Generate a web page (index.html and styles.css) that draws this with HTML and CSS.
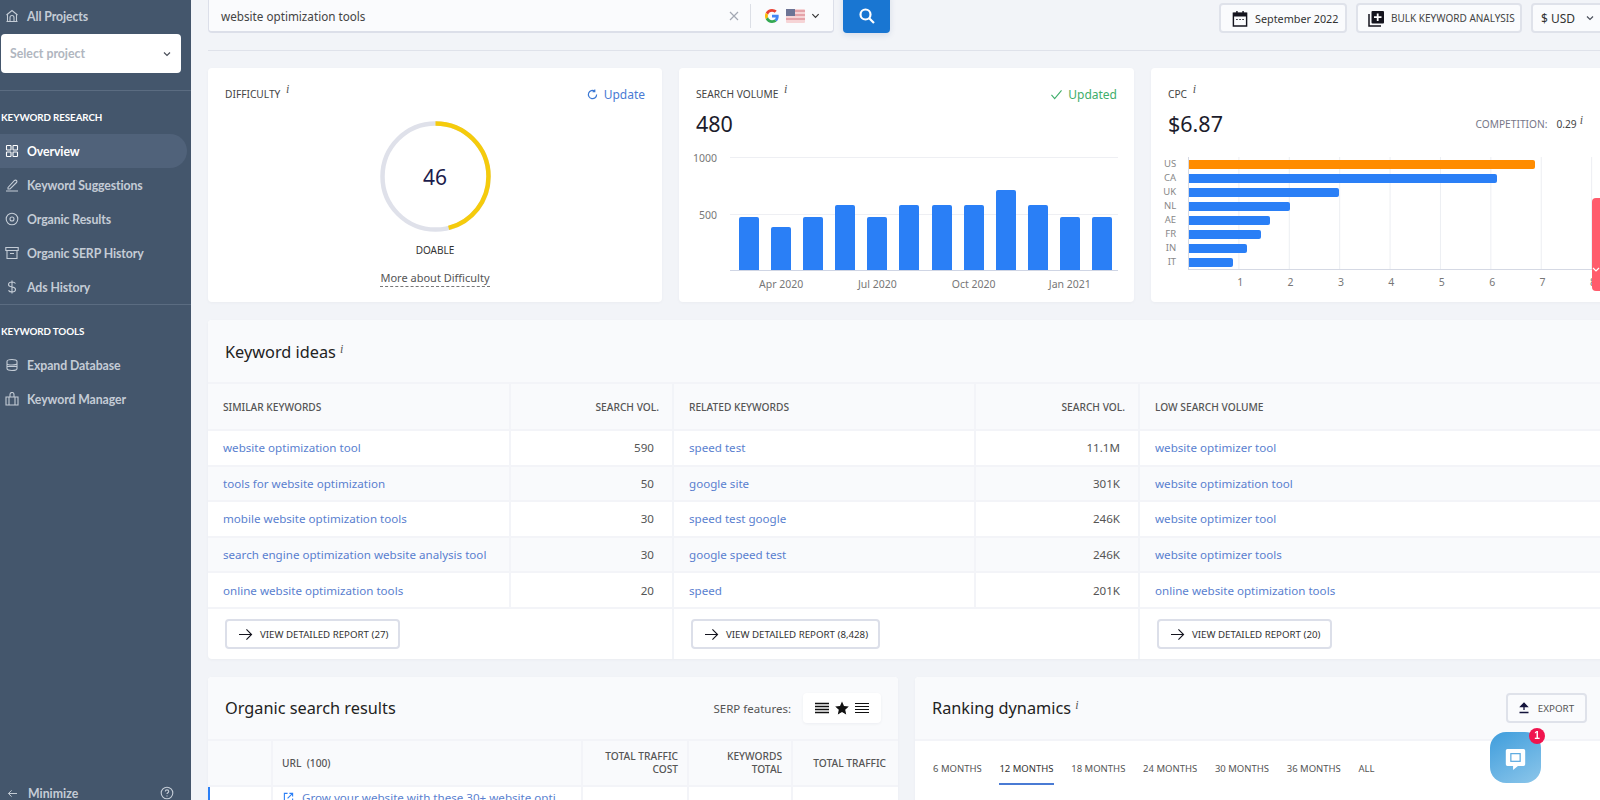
FILE: index.html
```html
<!DOCTYPE html>
<html lang="en">
<head>
<meta charset="utf-8">
<title>Keyword Overview</title>
<link rel="stylesheet" href="styles.css">
</head>
<body>
<aside class="sidebar">
  <div class="side-top">
    <a class="nav-item">
      <svg class="nav-icon" viewBox="0 0 14 14"><path d="M1.500 6 7 1.500 12.500 6M2.500 5.500v7h9v-7M5 12.500V8.500a2 2 0 0 1 4 0v4M1.500 12.500h11"/></svg>
      <span>All Projects</span>
    </a>
    <div class="project-select"><span>Select project</span><svg class="chev" viewBox="0 0 10 6"><path d="M2 1.500 5 4.500 8 1.500"/></svg></div>
  </div>
  <section class="side-group">
    <h3>KEYWORD RESEARCH</h3>
    <a class="nav-item active">
      <svg class="nav-icon" viewBox="0 0 14 14"><rect x="1.500" y="1.500" width="4.500" height="4.500" rx=".6"/><rect x="8" y="1.500" width="4.500" height="4.500" rx=".6"/><rect x="1.500" y="8" width="4.500" height="4.500" rx=".6"/><rect x="8" y="8" width="4.500" height="4.500" rx=".6"/></svg>
      <span>Overview</span>
    </a>
    <a class="nav-item">
      <svg class="nav-icon" viewBox="0 0 14 14"><path d="M3 9.500 9.500 2.500a1.400 1.400 0 0 1 2 2L5 11H3zM1 13h12"/></svg>
      <span>Keyword Suggestions</span>
    </a>
    <a class="nav-item">
      <svg class="nav-icon" viewBox="0 0 14 14"><circle cx="7" cy="7" r="5.800"/><circle cx="7" cy="7" r="2"/></svg>
      <span>Organic Results</span>
    </a>
    <a class="nav-item">
      <svg class="nav-icon" viewBox="0 0 14 14"><path d="M.8 1.500h12.400v3H.8zM2 4.500v8h10v-8M5 7.500h4"/></svg>
      <span>Organic SERP History</span>
    </a>
    <a class="nav-item">
      <svg class="nav-icon" viewBox="0 0 14 14"><path d="M10.500 3.500C9.800 2.500 8.500 2 7 2 5 2 3.500 3 3.500 4.600S5 6.800 7 7s3.500 1 3.500 2.500S9 12 7 12c-1.600 0-2.900-.6-3.500-1.600M7 .5v13"/></svg>
      <span>Ads History</span>
    </a>
  </section>
  <section class="side-group">
    <h3>KEYWORD TOOLS</h3>
    <a class="nav-item">
      <svg class="nav-icon" viewBox="0 0 14 14"><path d="M2 3.500C2 2 4 1.500 7 1.500s5 .5 5 2v7c0 1.500-2 2-5 2s-5-.5-5-2zM2 5.500c0 1 2 1.500 5 1.500s5-.5 5-1.500M2 8.500h10"/></svg>
      <span>Expand Database</span>
    </a>
    <a class="nav-item">
      <svg class="nav-icon" viewBox="0 0 14 14"><path d="M1 5h12v8H1zM4 5v8M10 5v8M5 5V2.500a2 2 0 0 1 4 0V5"/></svg>
      <span>Keyword Manager</span>
    </a>
  </section>
  <div class="side-bottom">
    <svg class="min-arrow" viewBox="0 0 12 10"><path d="M11 5H1.500M5 1.500 1.500 5 5 8.500"/></svg>
    <span class="min-label">Minimize</span>
    <svg class="help" viewBox="0 0 14 14"><circle cx="7" cy="7" r="5.800"/><path d="M5.300 5.500c0-1 .8-1.600 1.700-1.600s1.700.6 1.700 1.500c0 1.300-1.700 1.300-1.700 2.600M7 9.500v1"/></svg>
  </div>
</aside>

<main class="main">
  <header class="toolbar">
    <div class="search-box">
      <span class="search-text">website optimization tools</span>
      <svg class="clear" viewBox="0 0 10 10"><path d="M1 1l8 8M9 1l-8 8"/></svg>
      <span class="search-sep"></span>
      <svg class="g-logo" viewBox="0 0 48 48"><path fill="#ea4335" d="M24 9.500c3.500 0 6.700 1.200 9.200 3.600l6.900-6.900C35.900 2.400 30.400 0 24 0 14.600 0 6.500 5.400 2.600 13.200l8 6.200C12.400 13.700 17.700 9.500 24 9.500z"/><path fill="#4285f4" d="M47 24.500c0-1.600-.1-3.100-.4-4.500H24v9h12.900c-.6 3-2.200 5.500-4.800 7.200l7.700 6C44.300 38 47 31.800 47 24.500z"/><path fill="#fbbc05" d="M10.500 28.600c-.5-1.400-.8-3-.8-4.600s.3-3.200.8-4.600l-8-6.200C.9 16.500 0 20.100 0 24s.9 7.500 2.600 10.800z"/><path fill="#34a853" d="M24 48c6.500 0 11.900-2.100 15.900-5.800l-7.700-6c-2.200 1.500-4.900 2.300-8.100 2.300-6.300 0-11.600-4.200-13.500-9.900l-8 6.200C6.500 42.600 14.600 48 24 48z"/></svg>
      <svg class="flag" viewBox="0 0 19 14"><rect width="19" height="14" rx="1" fill="#f6d4d6"/><path d="M0 2h19M0 6h19M0 10h19" stroke="#cc5c66" stroke-width="1.200" opacity=".8"/><rect width="9" height="7" fill="#6d7495"/></svg>
      <svg class="flag-chev" viewBox="0 0 10 6"><path d="M1.500 1 5 4.500 8.500 1"/></svg>
    </div>
    <button class="search-btn" type="button"><svg viewBox="0 0 18 18"><circle cx="7.500" cy="7.500" r="5"/><path d="M11 11l5 5"/></svg></button>
    <div class="tool-right">
      <button class="tool-btn date" type="button">
        <svg class="ico-cal" viewBox="0 0 16 18"><path d="M1 3.500h14v13.500H1z" fill="none" stroke="#14141e" stroke-width="1.500"/><path d="M1 3h14v4H1zM4 1h1.500v3H4zM10.500 1H12v3h-1.500z" fill="#14141e"/><path d="M4 10h1.500M7.300 10h1.500M10.500 10H12" stroke="#14141e" stroke-width="1.200"/></svg>
        <span>September 2022</span>
      </button>
      <button class="tool-btn bulk" type="button">
        <svg class="ico-bulk" viewBox="0 0 17 17"><path d="M1 4v12h12" fill="none" stroke="#14141e" stroke-width="1.500"/><rect x="3.500" y="1" width="12.500" height="12.500" rx="1" fill="#14141e"/><path d="M9.700 3.500v7.500M6 7.200h7.500" stroke="#fff" stroke-width="1.800"/></svg>
        <span>BULK KEYWORD ANALYSIS</span>
      </button>
      <button class="tool-btn usd" type="button"><span>$ USD</span><svg class="chev" viewBox="0 0 10 6"><path d="M2 1.500 5 4.500 8 1.500"/></svg></button>
    </div>
  </header>

  <div class="metrics">
    <section class="card diff">
      <div class="card-head">
        <h4>DIFFICULTY <i>i</i></h4>
        <a class="update"><svg viewBox="0 0 12 12"><path d="M10.500 6A4.500 4.500 0 1 1 8.500 2.300M8.500.5v2.500H6"/></svg>Update</a>
      </div>
      <div class="gauge">
        <svg viewBox="0 0 111 111"><circle class="g-track" cx="55.500" cy="55.500" r="53"/><circle class="g-val" cx="55.500" cy="55.500" r="53" pathLength="100" stroke-dasharray="46 100" transform="rotate(-90 55.500 55.500)"/></svg>
        <span class="g-num">46</span>
      </div>
      <div class="doable">DOABLE</div>
      <a class="more">More about Difficulty</a>
    </section>

    <section class="card vol">
      <div class="card-head">
        <h4>SEARCH VOLUME <i>i</i></h4>
        <span class="updated"><svg viewBox="0 0 14 12"><path d="M1.500 6.500 5 10.500 12.500 1.500"/></svg>Updated</span>
      </div>
      <div class="big-num">480</div>
      <div class="vol-chart">
        <div class="vol-y"><span>1000</span><span>500</span></div>
        <div class="vol-right">
          <div class="vol-plot">
            <div class="bar-cell"><div class="bar" style="height:53px"></div></div>
            <div class="bar-cell"><div class="bar" style="height:43px"></div></div>
            <div class="bar-cell"><div class="bar" style="height:53px"></div></div>
            <div class="bar-cell"><div class="bar" style="height:65px"></div></div>
            <div class="bar-cell"><div class="bar" style="height:53px"></div></div>
            <div class="bar-cell"><div class="bar" style="height:65px"></div></div>
            <div class="bar-cell"><div class="bar" style="height:65px"></div></div>
            <div class="bar-cell"><div class="bar" style="height:65px"></div></div>
            <div class="bar-cell"><div class="bar" style="height:80px"></div></div>
            <div class="bar-cell"><div class="bar" style="height:65px"></div></div>
            <div class="bar-cell"><div class="bar" style="height:53px"></div></div>
            <div class="bar-cell"><div class="bar" style="height:53px"></div></div>
          </div>
          <div class="vol-x">
            <span></span><span>Apr 2020</span><span></span><span></span><span>Jul 2020</span><span></span><span></span><span>Oct 2020</span><span></span><span></span><span>Jan 2021</span><span></span>
          </div>
        </div>
      </div>
    </section>

    <section class="card cpc">
      <div class="card-head">
        <h4>CPC <i>i</i></h4>
      </div>
      <div class="cpc-num">
        <div class="big-num">$6.87</div>
        <div class="comp"><span>COMPETITION:</span><b>0.29</b><i>i</i></div>
      </div>
      <div class="cpc-chart">
        <div class="cpc-y"><span>US</span><span>CA</span><span>UK</span><span>NL</span><span>AE</span><span>FR</span><span>IN</span><span>IT</span></div>
        <div class="cpc-plot">
          <div class="h-row"><div class="h-bar top" style="width:346px"></div></div>
          <div class="h-row"><div class="h-bar" style="width:308px"></div></div>
          <div class="h-row"><div class="h-bar" style="width:150px"></div></div>
          <div class="h-row"><div class="h-bar" style="width:101px"></div></div>
          <div class="h-row"><div class="h-bar" style="width:81px"></div></div>
          <div class="h-row"><div class="h-bar" style="width:72px"></div></div>
          <div class="h-row"><div class="h-bar" style="width:58px"></div></div>
          <div class="h-row"><div class="h-bar" style="width:44px"></div></div>
        </div>
      </div>
      <div class="cpc-x"><span>1</span><span>2</span><span>3</span><span>4</span><span>5</span><span>6</span><span>7</span><span>8</span></div>
    </section>
  </div>

  <section class="card ideas">
    <div class="ideas-head"><h2>Keyword ideas <i>i</i></h2></div>
    <div class="ideas-cols">
      <div class="ideas-col c1">
        <div class="i-row i-th"><span class="i-name">SIMILAR KEYWORDS</span><span class="i-val">SEARCH VOL.</span></div>
        <div class="i-row"><a class="i-name">website optimization tool</a><span class="i-val">590</span></div>
        <div class="i-row alt"><a class="i-name">tools for website optimization</a><span class="i-val">50</span></div>
        <div class="i-row"><a class="i-name">mobile website optimization tools</a><span class="i-val">30</span></div>
        <div class="i-row alt"><a class="i-name">search engine optimization website analysis tool</a><span class="i-val">30</span></div>
        <div class="i-row"><a class="i-name">online website optimization tools</a><span class="i-val">20</span></div>
        <div class="i-foot"><button class="report" type="button"><svg viewBox="0 0 16 14"><path d="M1 7h13.500M9 1.500 14.500 7 9 12.500"/></svg><span>VIEW DETAILED REPORT (27)</span></button></div>
      </div>
      <div class="ideas-col c2">
        <div class="i-row i-th"><span class="i-name">RELATED KEYWORDS</span><span class="i-val">SEARCH VOL.</span></div>
        <div class="i-row"><a class="i-name">speed test</a><span class="i-val">11.1M</span></div>
        <div class="i-row alt"><a class="i-name">google site</a><span class="i-val">301K</span></div>
        <div class="i-row"><a class="i-name">speed test google</a><span class="i-val">246K</span></div>
        <div class="i-row alt"><a class="i-name">google speed test</a><span class="i-val">246K</span></div>
        <div class="i-row"><a class="i-name">speed</a><span class="i-val">201K</span></div>
        <div class="i-foot"><button class="report" type="button"><svg viewBox="0 0 16 14"><path d="M1 7h13.500M9 1.500 14.500 7 9 12.500"/></svg><span>VIEW DETAILED REPORT (8,428)</span></button></div>
      </div>
      <div class="ideas-col c3">
        <div class="i-row i-th"><span class="i-name">LOW SEARCH VOLUME</span></div>
        <div class="i-row"><a class="i-name">website optimizer tool</a></div>
        <div class="i-row alt"><a class="i-name">website optimization tool</a></div>
        <div class="i-row"><a class="i-name">website optimizer tool</a></div>
        <div class="i-row alt"><a class="i-name">website optimizer tools</a></div>
        <div class="i-row"><a class="i-name">online website optimization tools</a></div>
        <div class="i-foot"><button class="report" type="button"><svg viewBox="0 0 16 14"><path d="M1 7h13.500M9 1.500 14.500 7 9 12.500"/></svg><span>VIEW DETAILED REPORT (20)</span></button></div>
      </div>
    </div>
  </section>

  <div class="bottom-row">
    <section class="card organic">
      <div class="b-head">
        <h2>Organic search results</h2>
        <div class="serp">
          <span>SERP features:</span>
          <div class="serp-toggle">
            <svg viewBox="0 0 14 12"><path d="M0 1.500h14M0 4.500h14M0 7.500h14M0 10.500h14"/></svg>
            <svg class="star" viewBox="0 0 14 14"><path d="M7 .5l2 4.500 4.800.5-3.600 3.200 1 4.800L7 11l-4.200 2.500 1-4.800L.2 5.500 5 5z"/></svg>
            <svg class="thin" viewBox="0 0 14 12"><path d="M0 1.500h14M0 4.500h14M0 7.500h14M0 10.500h14"/></svg>
          </div>
        </div>
      </div>
      <div class="o-table">
        <div class="o-th"></div>
        <div class="o-th o-url">URL&nbsp; (100)</div>
        <div class="o-th o-r">TOTAL TRAFFIC<br>COST</div>
        <div class="o-th o-r">KEYWORDS<br>TOTAL</div>
        <div class="o-th o-r">TOTAL TRAFFIC</div>
        <div class="o-td o-first"></div>
        <div class="o-td o-link"><svg viewBox="0 0 12 12"><path d="M5 1.500H1.500v9h9V7M7 1.500h3.500V5M10.500 1.500 5 7"/></svg><a>Grow your website with these 30+ website opti</a></div>
        <div class="o-td"></div>
        <div class="o-td"></div>
        <div class="o-td"></div>
      </div>
    </section>
    <section class="card ranking">
      <div class="b-head">
        <h2>Ranking dynamics <i>i</i></h2>
        <button class="export" type="button"><svg viewBox="0 0 10 12"><path d="M5 8V1.500M1.800 4.500 5 1.200l3.200 3.300z" /><path d="M.5 10.500h9"/></svg><span>EXPORT</span></button>
      </div>
      <nav class="tabs">
        <a>6 MONTHS</a><a class="on">12 MONTHS</a><a>18 MONTHS</a><a>24 MONTHS</a><a>30 MONTHS</a><a>36 MONTHS</a><a>ALL</a>
      </nav>
    </section>
  </div>
</main>

<div class="side-tab"><svg viewBox="0 0 8 6"><path d="M1 1l3 3 3-3"/></svg></div>
<div class="chat">
  <svg viewBox="0 0 26 28"><path d="M3 1h20a2 2 0 0 1 2 2v17a2 2 0 0 1-2 2h-7l-6 5v-5H3a2 2 0 0 1-2-2V3a2 2 0 0 1 2-2z" fill="#fff"/><rect x="6.500" y="6" width="13" height="11" fill="#5aa9e0" /><rect x="8" y="7.500" width="10" height="8" fill="#fff"/></svg>
  <span class="chat-badge">1</span>
</div>
</body>
</html>
```

FILE: styles.css
```css
* { box-sizing: border-box; }
html, body { margin: 0; height: 800px; overflow: hidden; }
body {
  display: flex;
  background: #f2f4f8;
  font-family: "Noto Sans", "Liberation Sans", sans-serif;
  color: #333;
}
h2, h3, h4 { margin: 0; font-weight: 400; }
button { font-family: inherit; cursor: pointer; }

/* Sidebar */
.sidebar {
  width: 191px;
  height: 800px;
  flex: none;
  background: #44566c;
  display: flex;
  flex-direction: column;
  font-family: Lato, sans-serif;
  position: relative;
}
.side-top { padding-bottom: 17px; border-bottom: 1px solid #5b6c81; }
.nav-item {
  height: 34px;
  display: flex;
  align-items: center;
  gap: 8px;
  padding-left: 5px;
  font-size: 12.300px;
  font-weight: 700;
  color: #c4ccd6;
  letter-spacing: -0.1px;
}
.nav-icon { width: 14px; height: 14px; fill: none; stroke: #c4ccd6; stroke-width: 1.100; flex: none; }
.side-top .nav-item { height: 32px; margin-bottom: 2px; }
.project-select {
  margin-left: 1px;
  width: 180px;
  height: 39px;
  background: #fff;
  border-radius: 4px;
  display: flex;
  align-items: center;
  justify-content: space-between;
  padding: 0 9px;
  font-size: 12.300px;
  font-weight: 700;
  color: #b0b6c0;
}
.chev { width: 10px; height: 6px; fill: none; stroke: #4a4f5a; stroke-width: 1.200; }
.side-group { padding-top: 20px; border-bottom: 1px solid #5b6c81; padding-bottom: 0; }
.side-group + .side-group { border-bottom: 0; }
.side-group h3 { font-size: 9.800px; font-weight: 700; color: #fff; padding-left: 1px; line-height: 13px; margin-bottom: 10px; letter-spacing: -0.1px; }
.nav-item.active {
  width: 187px;
  background: #50627a;
  border-radius: 0 17px 17px 0;
  color: #fff;
}
.nav-item.active .nav-icon { stroke: #fff; }
.side-bottom {
  position: absolute;
  left: 0; right: 0; bottom: -1px;
  height: 16px;
  display: flex;
  align-items: center;
  padding-left: 7px;
  color: #c4ccd6;
  font-size: 12.300px;
  font-weight: 700;
}
.min-arrow { width: 11px; height: 9px; fill: none; stroke: #c4ccd6; stroke-width: 1.100; margin-right: 10px; }
.min-label { flex: 1; }
.help { width: 14px; height: 14px; fill: none; stroke: #c4ccd6; stroke-width: 1.100; margin-right: 17px; }

/* Main */
.main { flex: 1; min-width: 0; overflow: hidden; padding-left: 17px; }
.toolbar {
  width: 1500px;
  height: 51px;
  border-bottom: 1px solid #dfe2ea;
  display: flex;
  padding-bottom: 17px;
  align-items: flex-end;
}
.search-box {
  width: 626px;
  height: 40px;
  margin-top: -7px;
  background: #fafbfd;
  border: 1px solid #dcdfe9;
  border-bottom-width: 2px;
  border-top: 0;
  border-radius: 0 0 4px 4px;
  display: flex;
  align-items: center;
  padding: 7px 0 0 12px;
  font-size: 11.700px;
  color: #444;
}
.search-text { flex: 1; }
.clear { width: 10px; height: 10px; fill: none; stroke: #a3a8b3; stroke-width: 1.200; margin-right: 11px; }
.search-sep { width: 1px; height: 24px; background: #dcdfe6; margin-right: 14px; }
.g-logo { width: 14px; height: 14px; margin-right: 7px; }
.flag { width: 19px; height: 14px; margin-right: 6px; }
.flag-chev { width: 9px; height: 6px; fill: none; stroke: #333; stroke-width: 1.300; margin-right: 13px; }
.search-btn {
  width: 47px;
  height: 40px;
  margin-left: 9px;
  background: #1976d2;
  border: 0;
  border-radius: 0 0 4px 4px;
  padding: 5px 0 0;
  box-shadow: 0 2px 6px rgba(25, 60, 120, .12);
  display: flex;
  align-items: center;
  justify-content: center;
}
.search-btn svg { width: 18px; height: 18px; fill: none; stroke: #fff; stroke-width: 2.200; }
.tool-right { display: flex; gap: 9px; margin-left: 329px; }
.tool-btn {
  height: 30px;
  background: #fafbfd;
  border: 2px solid #dfe2ea;
  border-radius: 4px;
  display: flex;
  align-items: center;
  padding: 0;
  color: #333;
  white-space: nowrap;
}
.date { width: 128px; font-size: 10.800px; padding-left: 11px; gap: 7px; }
.bulk { width: 166px; font-size: 10px; padding-left: 10px; gap: 6px; color: #444; }
.usd { width: 80px; font-size: 12px; padding-left: 8px; gap: 10px; }
.ico-cal { width: 16px; height: 17px; flex: none; }
.ico-bulk { width: 17px; height: 17px; flex: none; }

.card { background: #fff; border-radius: 4px; box-shadow: 0 1px 3px rgba(40, 50, 80, .04); }
.metrics { display: flex; gap: 17px; width: 1420px; margin-top: 17px; }
.diff, .vol, .cpc { height: 234px; padding: 17px 17px 0; }
.diff { width: 454px; }
.vol { width: 455px; }
.cpc { width: 464px; }
.card-head { display: flex; justify-content: space-between; align-items: center; height: 18px; }
.card-head h4 { font-size: 10.200px; color: #444; }
h4 i, h2 i, .comp i { font-family: "Liberation Serif", serif; font-size: 12px; position: relative; top: -5px; margin-left: 3px; color: #555; }
h2 i { margin-left: 0; }
.update { font-size: 12px; color: #4a7bd4; display: flex; align-items: center; gap: 6px; }
.update svg { width: 11px; height: 11px; fill: none; stroke: #3b78d4; stroke-width: 1.300; }
.updated { font-size: 12px; color: #3fae6b; display: flex; align-items: center; gap: 5px; }
.updated svg { width: 13px; height: 11px; fill: none; stroke: #3fae6b; stroke-width: 1.200; }

.gauge { width: 111px; height: 111px; margin: 18px auto 0; display: flex; align-items: center; justify-content: center; position: relative; }
.gauge svg { position: absolute; inset: 0; width: 111px; height: 111px; fill: none; stroke-width: 4.500; }
.g-track { stroke: #dfe1ea; }
.g-val { stroke: #f5cb0c; }
.g-num { font-size: 21px; color: #1c1c4c; }
.doable { text-align: center; font-size: 10px; color: #333; margin-top: 11px; line-height: 14px; }
.more { display: table; margin: 14px auto 0; font-size: 11px; color: #555; line-height: 14px; border-bottom: 1px dashed #777; padding-bottom: 1px; }

.big-num { font-size: 21.500px; color: #1c1c2c; line-height: 28px; margin-top: 7px; }
.vol-chart { display: flex; margin: 19px -1px 0 -17px; }
.vol-y { width: 51px; padding-right: 13px; height: 113px; display: flex; flex-direction: column; gap: 42px; align-items: flex-end; margin-top: -6px; font-size: 10.500px; color: #777; line-height: 14px; }
.vol-y span + span { margin-top: 1px; }
.vol-right { flex: 1; }
.vol-plot {
  height: 114px;
  display: flex;
  align-items: flex-end;
  padding: 0 0 0 3px;
  border-bottom: 1px solid #cfd5e4;
  background:
    linear-gradient(#eeeff3, #eeeff3) 0 0 / 100% 1px no-repeat,
    linear-gradient(#eeeff3, #eeeff3) 0 57px / 100% 1px no-repeat;
}
.bar-cell { flex: 1; display: flex; justify-content: center; align-items: flex-end; }
.bar { width: 20px; background: #2a7ff6; border-radius: 2px 2px 0 0; }
.vol-x { display: flex; padding: 6px 0 0 3px; font-size: 10.500px; color: #777; line-height: 14px; }
.vol-x span { flex: 1; min-width: 0; display: flex; justify-content: center; white-space: nowrap; }

.cpc-num { display: flex; justify-content: space-between; align-items: center; padding-right: 17px; width: 432px; }
.comp { font-size: 10.200px; color: #778; display: flex; align-items: baseline; margin-top: 7px; margin-left: -2px; }
.comp b { font-weight: 400; color: #444; margin-left: 9px; }
.comp i { top: -4px; }
.cpc-chart { display: flex; margin-top: 19px; margin-left: -17px; }
.cpc-y { width: 39px; padding-right: 12px; display: flex; flex-direction: column; font-size: 9.500px; color: #888; text-align: right; }
.cpc-y span { height: 14px; line-height: 14px; }
.cpc-plot {
  width: 440px;
  height: 113px;
  border-left: 1px solid #d5d9e4;
  border-bottom: 1px solid #d5d9e4;
  background: linear-gradient(to right, transparent calc(100% - 1px), #eceef2 0) 0 0 / 50.400px 100%;
}
.h-row { height: 14px; display: flex; align-items: center; }
.h-bar { height: 9px; background: #2a7ff6; border-radius: 0 2px 2px 0; }
.h-bar.top { background: #ff8c00; }
.cpc-x { display: flex; margin: 5px 0 0 47px; font-size: 10.500px; color: #777; line-height: 14px; }
.cpc-x span { width: 50.400px; flex: none; text-align: center; }

/* Keyword ideas */
.ideas { width: 1420px; margin-top: 18px; height: 339px; overflow: hidden; }
.ideas-head { height: 64px; background: #f9fafc; display: flex; align-items: center; padding-left: 17px; border-bottom: 2px solid #f3f4f8; padding-top: 2px; }
h2 { font-size: 16.300px; color: #222; }
.ideas-cols { display: flex; }
.ideas-col { flex: none; border-right: 2px solid #f2f4f8; }
.c1 { width: 466px; }
.c2 { width: 466px; }
.c3 { flex: 1; border-right: 0; }
.i-row { display: flex; height: 35.600px; border-bottom: 2px solid #f3f4f8; font-size: 11.600px; }
.i-row.alt { background: #f9fafc; }
.i-th { height: 47px; background: #f9fafc; font-size: 10.200px; color: #555; font-weight: 500; }
.i-name { width: 303px; flex: none; padding-left: 15px; display: flex; align-items: center; border-right: 2px solid #f3f4f8; color: #5a7fcf; white-space: nowrap; }
.c2 .i-name { width: 302px; padding-left: 15px; }
.i-th .i-name { color: #555; }
.i-val { flex: 1; display: flex; align-items: center; justify-content: flex-end; padding-right: 18px; color: #555; }
.i-th .i-val { padding-right: 13px; }
.c3 .i-name { border-right: 0; }
.i-foot { height: 51px; display: flex; align-items: center; padding-left: 17px; }
.report {
  height: 30px;
  background: #fff;
  border: 2px solid #dcdfe9;
  border-radius: 4px;
  display: flex;
  align-items: center;
  padding: 0 10px 0 11px;
  gap: 7px;
  font-size: 9.700px;
  color: #333;
}
.report svg { width: 15px; height: 13px; fill: none; stroke: #14141e; stroke-width: 1.200; }

/* Bottom */
.bottom-row { display: flex; gap: 17px; width: 1420px; margin-top: 18px; }
.organic { width: 690px; height: 140px; overflow: hidden; }
.ranking { width: 685px; height: 140px; overflow: hidden; border-radius: 4px 0 0 4px; }
.b-head { height: 64px; background: #f9fafc; border-bottom: 2px solid #f3f4f8; display: flex; align-items: center; justify-content: space-between; padding: 0 17px; }
.ranking .b-head { padding-right: 0; }
.serp { display: flex; align-items: center; gap: 12px; font-size: 11.500px; color: #555; }
.serp-toggle { width: 78px; height: 30px; background: #fff; border-radius: 4px; box-shadow: 0 1px 3px rgba(40,50,80,.06); display: flex; align-items: center; justify-content: center; gap: 6px; }
.serp-toggle svg { width: 14px; height: 12px; fill: none; stroke: #111; stroke-width: 1.700; }
.serp-toggle .thin { stroke-width: 1.100; }
.serp-toggle .star { height: 14px; fill: #111; stroke: none; }
.o-table { display: grid; grid-template-columns: 65px 310px 106px 104px 105px; grid-template-rows: 46px 30px; }
.o-th { background: #f9fafc; border-right: 2px solid #f3f4f8; border-bottom: 2px solid #f3f4f8; font-size: 10.200px; color: #555; display: flex; align-items: center; padding: 0 9px; line-height: 13px; font-weight: 500; }
.o-th.o-r { justify-content: flex-end; text-align: right; }
.o-th:nth-child(5) { border-right: 0; padding-right: 12px; }
.o-td { background: #fff; border-right: 2px solid #f3f4f8; }
.o-td:last-child { border-right: 0; }
.o-first { border-left: 2px solid #2a7ff6; }
.o-link { padding: 2px 0 0 10px; display: flex; gap: 8px; font-size: 11.600px; color: #5a7fcf; white-space: nowrap; overflow: hidden; line-height: 17px; }
.o-link svg { width: 11px; height: 11px; margin-top: 3px; flex: none; fill: none; stroke: #2a7ff6; stroke-width: 1.200; }
.export { width: 81px; height: 30px; margin-right: 13px; background: #fafbfd; border: 2px solid #dfe2ea; border-radius: 4px; display: flex; align-items: center; justify-content: center; gap: 9px; font-size: 9.800px; color: #555; padding: 0; }
.export svg { width: 10px; height: 12px; fill: #14143c; stroke: #14143c; stroke-width: 1.300; }
.tabs { display: flex; gap: 17.700px; padding: 20px 0 0 18px; font-size: 9.500px; color: #555; }
.tabs a { height: 24px; line-height: 16px; border-bottom: 2px solid transparent; }
.tabs a.on { color: #333; border-bottom-color: #4a7bd4; }

/* Floating */
.side-tab {
  position: fixed;
  top: 198px; right: 0;
  width: 8px; height: 93px;
  background: #ff5c6c;
  border-radius: 4px 0 0 4px;
  display: flex;
  align-items: flex-end;
  padding-bottom: 18px;
}
.side-tab svg { width: 8px; height: 6px; fill: none; stroke: #fff; stroke-width: 1.200; }
.chat {
  position: fixed;
  left: 1490px; top: 732px;
  width: 51px; height: 51px;
  background: linear-gradient(150deg, #3f9ddc, #8cc6ea);
  border-radius: 16px;
  display: flex;
  align-items: center;
  justify-content: center;
}
.chat > svg { width: 21px; height: 23px; margin-top: 4px; }
.chat-badge {
  position: absolute;
  right: -4px; top: -4px;
  width: 16px; height: 16px;
  border-radius: 50%;
  background: #f0144e;
  color: #fff;
  font: 700 10px/16px "Liberation Sans", sans-serif;
  text-align: center;
}
```
